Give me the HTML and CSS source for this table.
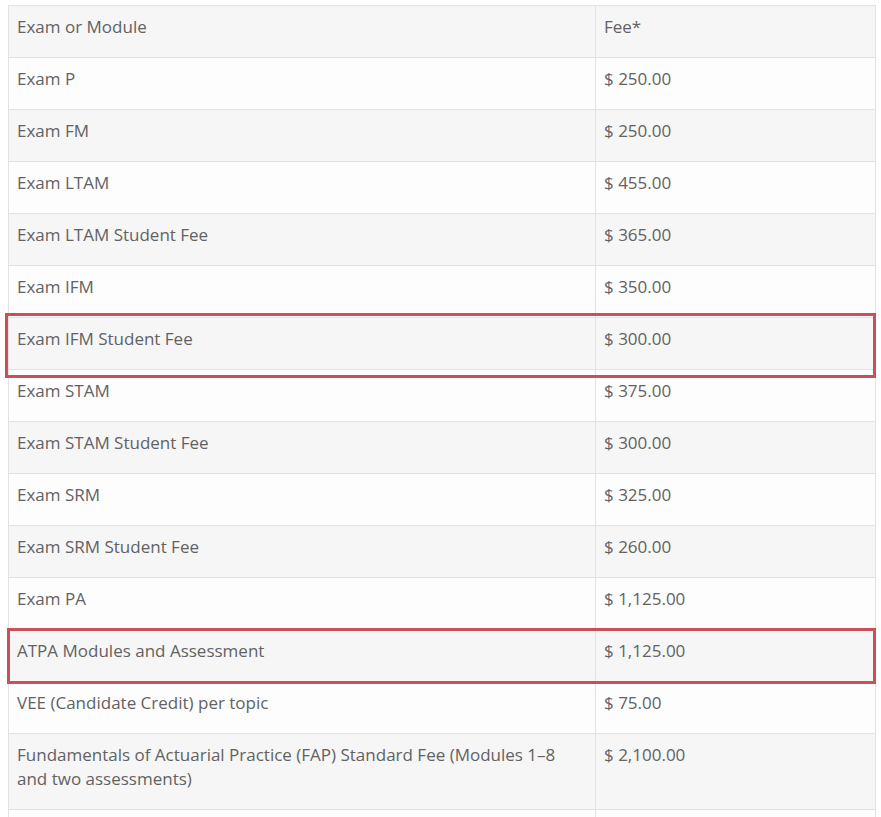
FILE: index.html
```html
<!DOCTYPE html>
<html>
<head>
<meta charset="utf-8">
<link rel="stylesheet" href="styles.css">
</head>
<body>
<div class="wrap">
  <table class="fees">
    <colgroup><col class="c1"><col class="c2"></colgroup>
    <tr class="head"><td>Exam or Module</td><td>Fee*</td></tr>
    <tr><td>Exam P</td><td>$ 250.00</td></tr>
    <tr><td>Exam FM</td><td>$ 250.00</td></tr>
    <tr><td>Exam LTAM</td><td>$ 455.00</td></tr>
    <tr><td>Exam LTAM Student Fee</td><td>$ 365.00</td></tr>
    <tr><td>Exam IFM</td><td>$ 350.00</td></tr>
    <tr><td>Exam IFM Student Fee</td><td>$ 300.00</td></tr>
    <tr><td>Exam STAM</td><td>$ 375.00</td></tr>
    <tr><td>Exam STAM Student Fee</td><td>$ 300.00</td></tr>
    <tr><td>Exam SRM</td><td>$ 325.00</td></tr>
    <tr><td>Exam SRM Student Fee</td><td>$ 260.00</td></tr>
    <tr><td>Exam PA</td><td>$ 1,125.00</td></tr>
    <tr><td>ATPA Modules and Assessment</td><td>$ 1,125.00</td></tr>
    <tr><td>VEE (Candidate Credit) per topic</td><td>$ 75.00</td></tr>
    <tr><td>Fundamentals of Actuarial Practice (FAP) Standard Fee (Modules 1–8 and two assessments)</td><td>$ 2,100.00</td></tr>
    <tr><td>&nbsp;</td><td>&nbsp;</td></tr>
  </table>
  <div class="mark mark1"></div>
  <div class="mark mark2"></div>
</div>
</body>
</html>
```

FILE: styles.css
```css
html, body {
  margin: 0;
  padding: 0;
  background: #ffffff;
  overflow: hidden;
}
.wrap {
  position: relative;
  padding: 5px 0 0 8px;
}
.fees {
  border-collapse: collapse;
  width: 868px;
  table-layout: fixed;
  font-family: "Open Sans", "Liberation Sans", sans-serif;
  font-size: 17px;
  line-height: 24px;
  color: #626262;
}
.c1 { width: 587px; }
.fees td {
  border: 1px solid #e2e2e2;
  padding: 9px 8px 18px 8px;
  vertical-align: top;
}
.fees tr:nth-child(odd) td { background: #f6f6f6; }
.fees tr:nth-child(even) td { background: #fdfdfd; }
.mark {
  position: absolute;
  border: 3px solid #c9505a;
  box-sizing: border-box;
}
.mark1 {
  left: 5px;
  top: 313px;
  width: 871px;
  height: 65px;
}
.mark2 {
  left: 7px;
  top: 628px;
  width: 869px;
  height: 56px;
}
```
